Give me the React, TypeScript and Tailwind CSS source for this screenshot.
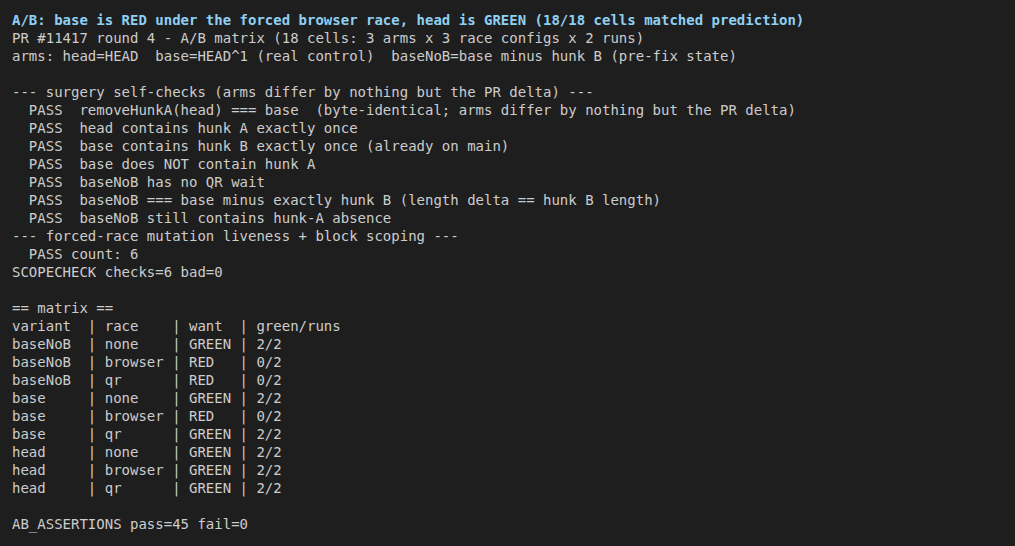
import React from "react";

const lines: string[] = [
  "PR #11417 round 4 - A/B matrix (18 cells: 3 arms x 3 race configs x 2 runs)",
  "arms: head=HEAD  base=HEAD^1 (real control)  baseNoB=base minus hunk B (pre-fix state)",
  "",
  "--- surgery self-checks (arms differ by nothing but the PR delta) ---",
  "  PASS  removeHunkA(head) === base  (byte-identical; arms differ by nothing but the PR delta)",
  "  PASS  head contains hunk A exactly once",
  "  PASS  base contains hunk B exactly once (already on main)",
  "  PASS  base does NOT contain hunk A",
  "  PASS  baseNoB has no QR wait",
  "  PASS  baseNoB === base minus exactly hunk B (length delta == hunk B length)",
  "  PASS  baseNoB still contains hunk-A absence",
  "--- forced-race mutation liveness + block scoping ---",
  "  PASS count: 6",
  "SCOPECHECK checks=6 bad=0",
  "",
  "== matrix ==",
  "variant  | race    | want  | green/runs",
  "baseNoB  | none    | GREEN | 2/2",
  "baseNoB  | browser | RED   | 0/2",
  "baseNoB  | qr      | RED   | 0/2",
  "base     | none    | GREEN | 2/2",
  "base     | browser | RED   | 0/2",
  "base     | qr      | GREEN | 2/2",
  "head     | none    | GREEN | 2/2",
  "head     | browser | GREEN | 2/2",
  "head     | qr      | GREEN | 2/2",
  "",
  "AB_ASSERTIONS pass=45 fail=0",
];

export default function App() {
  return (
    <div
      className="w-[1015px] h-[546px] bg-[#1e1e1e] text-[#cccccc] pl-3 pt-[11px] overflow-hidden text-[14px] leading-[18px] whitespace-pre"
      style={{ fontFamily: '"DejaVu Sans Mono", monospace' }}
    >
      <div className="font-bold text-[#8fd0f2]">
        A/B: base is RED under the forced browser race, head is GREEN (18/18 cells matched prediction)
      </div>
      {lines.map((l, i) => (
        <div key={i} className="h-[18px]">
          {l}
        </div>
      ))}
    </div>
  );
}
